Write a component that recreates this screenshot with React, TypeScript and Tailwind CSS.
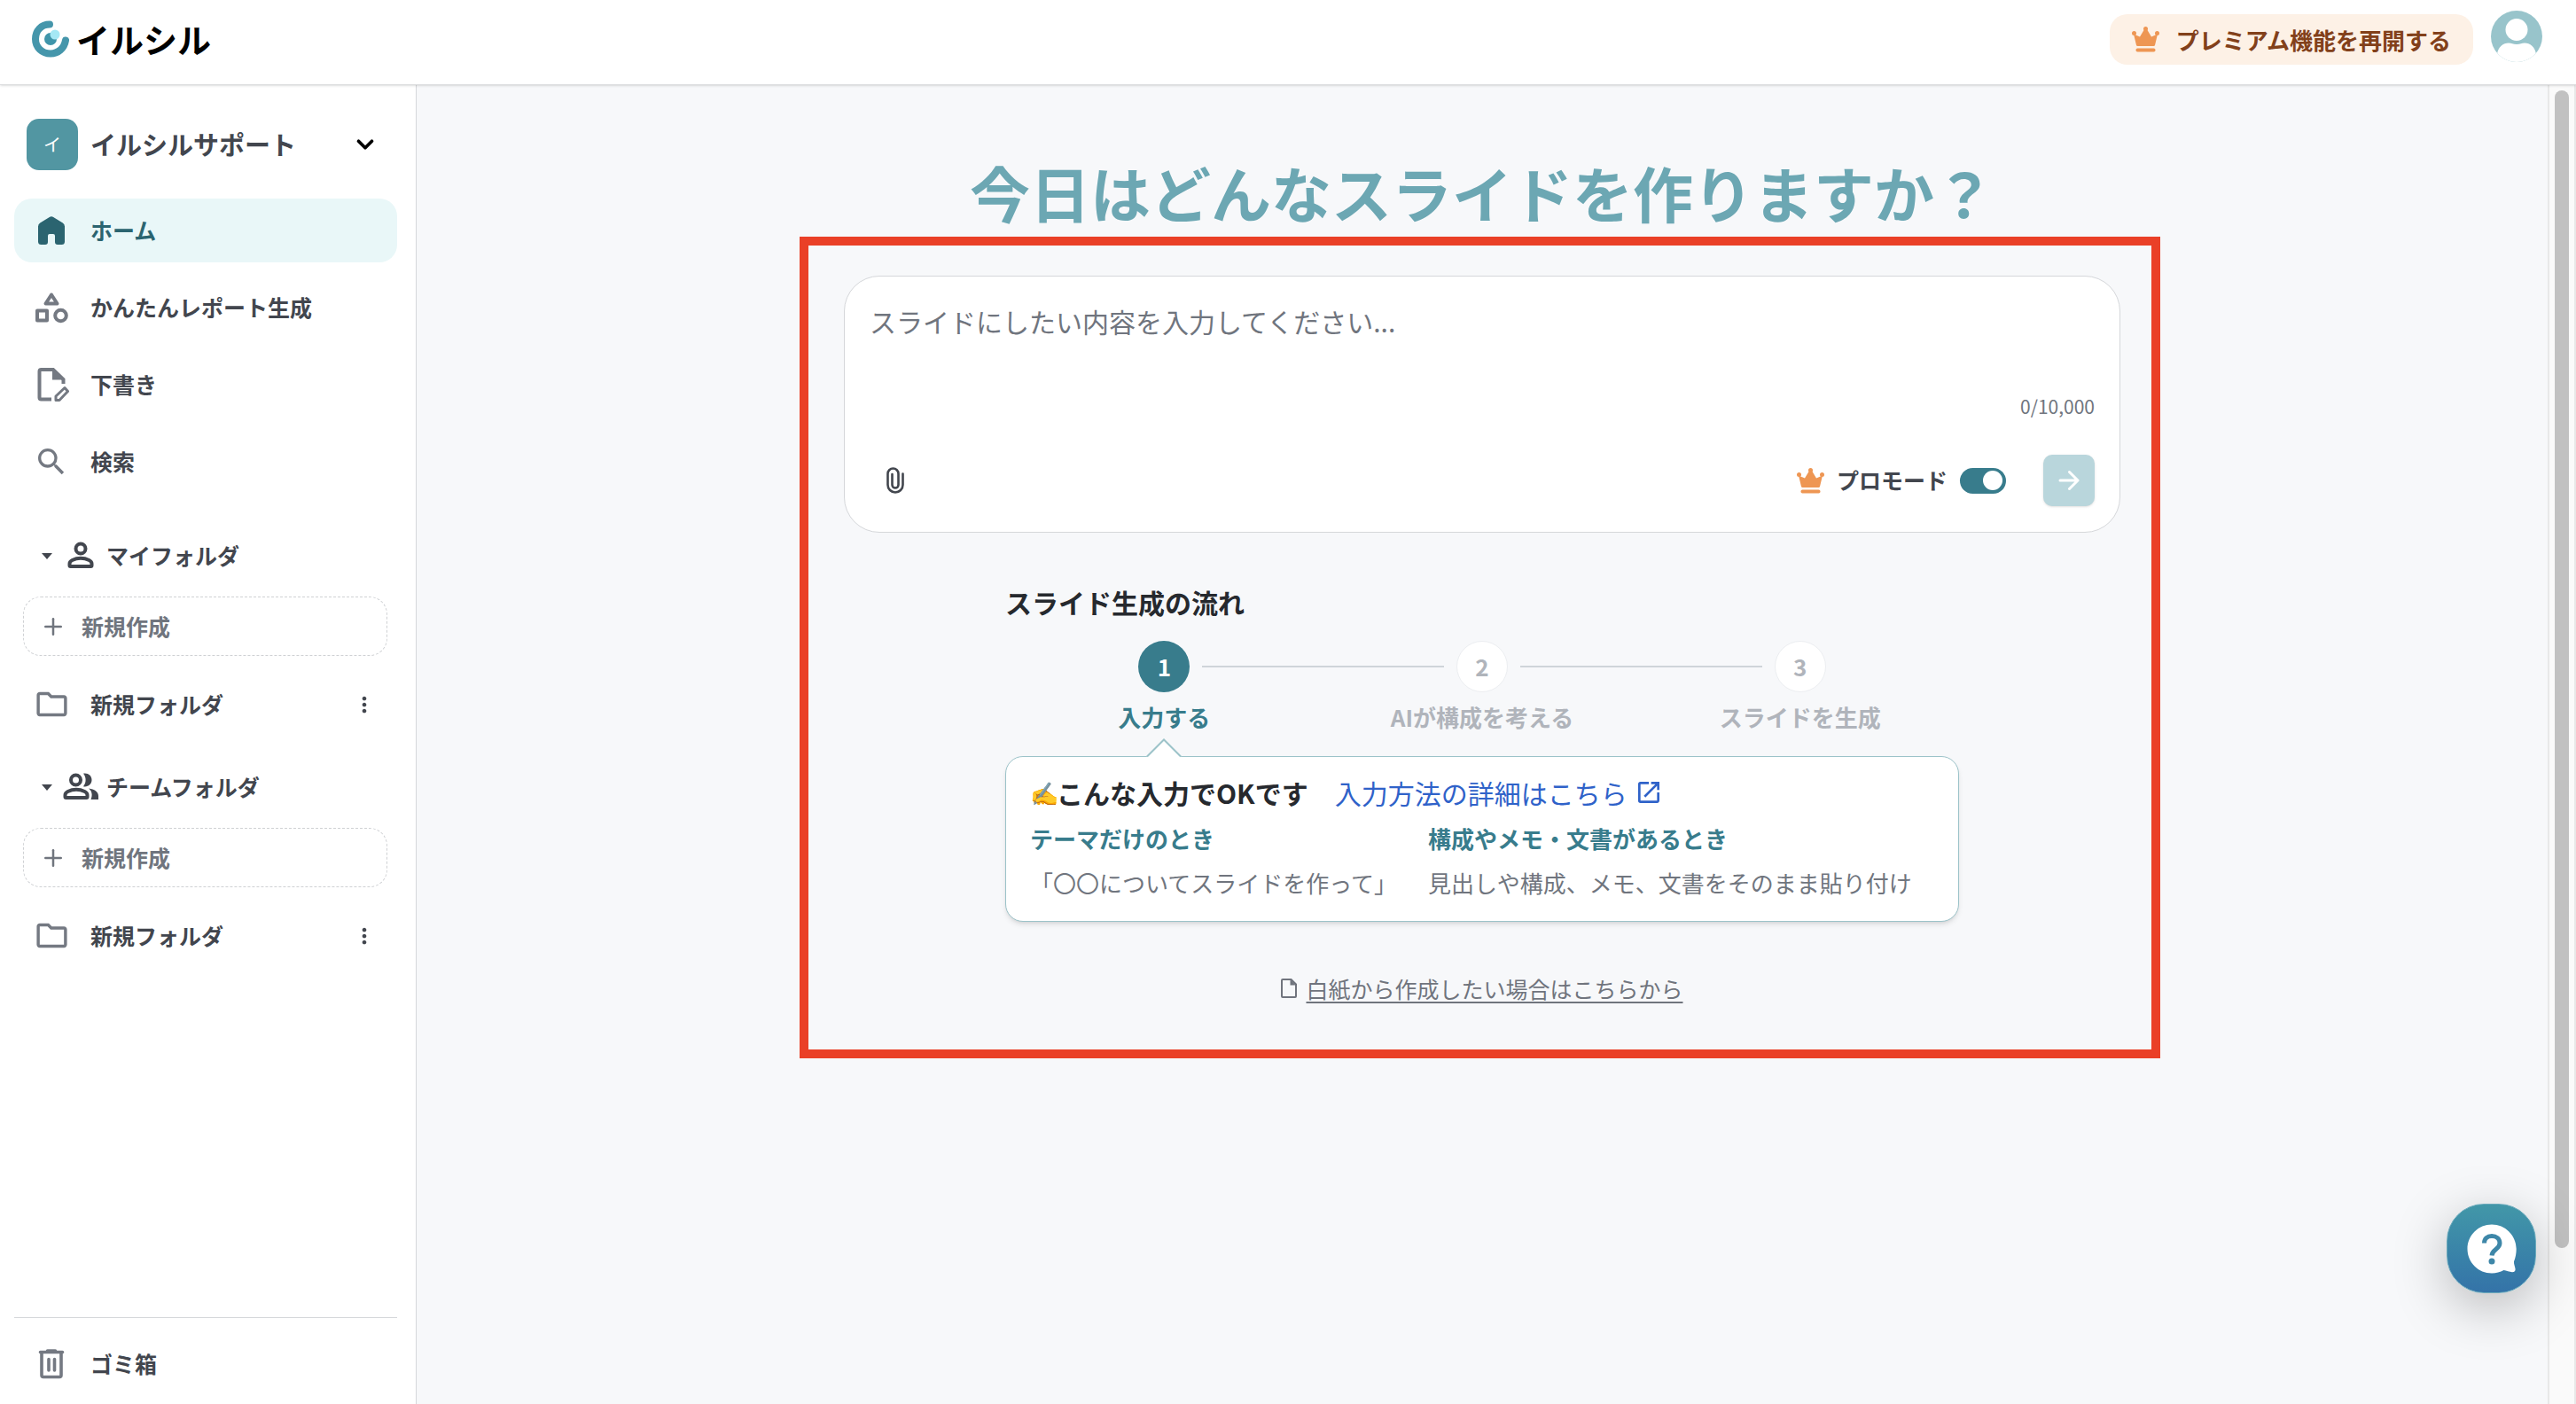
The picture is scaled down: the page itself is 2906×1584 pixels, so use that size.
import React from "react";
import { MdMoreVert, MdOpenInNew, MdOutlineFolder, MdSearch } from "react-icons/md";
import { ChevronDown, Plus } from "lucide-react";
import clsx from "clsx";

type IconProps = { className?: string };

// --- Icons ---

const LogoMark = ({ className }: IconProps) => (
  <svg viewBox="0 0 42 42" className={className} aria-hidden="true">
    <path
      d="M20 4.5C10.500 4.500 4 11.500 4 21c0 9.500 7.500 16.500 17 16.500 8.500 0 15.500-6 17-15"
      fill="none"
      stroke="#4596ab"
      strokeWidth="8"
      strokeLinecap="round"
    />
    <circle cx="21" cy="21" r="7" fill="#3f95aa" />
    <circle cx="26" cy="16" r="5.500" fill="#a5e8f5" />
  </svg>
);

const CrownIcon = ({ className }: IconProps) => (
  <svg viewBox="0 0 31 29" className={className} fill="#ee9653" aria-hidden="true">
    <circle cx="15.500" cy="2.500" r="2.500" />
    <circle cx="2.500" cy="7.500" r="2.500" />
    <circle cx="28.500" cy="7.500" r="2.500" />
    <path d="M2 8.500l7 3 4.500-7.500h4l4.500 7.500 7-3-3 12.500q-.3 1-1.500 1h-18q-1.200 0-1.500-1z" />
    <rect x="4.500" y="24.500" width="22" height="4" rx="1.800" />
  </svg>
);

const AvatarIcon = ({ className }: IconProps) => (
  <svg viewBox="0 0 58 58" className={className} aria-hidden="true">
    <clipPath id="avatar-clip">
      <circle cx="29" cy="29" r="29" />
    </clipPath>
    <g clipPath="url(#avatar-clip)">
      <rect width="58" height="58" fill="#98c4cb" />
      <circle cx="29" cy="21.500" r="12.500" fill="#fff" />
      <path d="M7 49c1-8 7-12.500 13-12.500 3 0 5 1.500 9 1.500s6-1.500 9-1.500c6 0 12 4.500 13 12.500v10H7z" fill="#fff" />
    </g>
  </svg>
);

const HomeIcon = ({ className }: IconProps) => (
  <svg viewBox="0 0 40 40" className={className} fill="#2b6470" aria-hidden="true">
    <path d="M7.200 11.500 17.800 5q2.200-1.300 4.400 0l10.600 6.500q2.200 1.600 2.200 4.200V32.500q0 3.500-3.500 3.500h-4.500q-3 0-3-3v-7q0-2-2-2h-4q-2 0-2 2v7q0 3-3 3H8.500Q5 36 5 32.500V15.700q0-2.600 2.200-4.200z" />
  </svg>
);

const CategoryIcon = ({ className }: IconProps) => (
  <svg
    viewBox="0 0 40 40"
    className={className}
    fill="none"
    stroke="currentColor"
    strokeWidth="4"
    strokeLinejoin="round"
    aria-hidden="true"
  >
    <path d="M20 5.500 26.500 15.500h-13z" />
    <rect x="4" y="23.500" width="11" height="11" />
    <circle cx="30.500" cy="29" r="6.300" />
  </svg>
);

const DraftIcon = ({ className }: IconProps) => (
  <svg viewBox="0 0 40 40" className={className} fill="none" stroke="#747982" aria-hidden="true">
    <path d="M20 36.500H8.500q-2 0-2-2V5q0-2 2-2H22l11.500 11V19" strokeWidth="4" />
    <path d="M21 3h2l12 11.500H21z" fill="#747982" stroke="none" />
    <path d="M25 37.500v-4.500l10-9.500 3.500 4-9.500 10z" strokeWidth="3" strokeLinejoin="round" />
  </svg>
);

const TrashIcon = ({ className }: IconProps) => (
  <svg viewBox="0 0 40 40" className={className} fill="none" stroke="#747982" aria-hidden="true">
    <path d="M7.500 6.500h25M15.500 5h9" strokeWidth="3.600" strokeLinecap="round" />
    <path d="M9 8v24.500q0 2 2 2h18q2 0 2-2V8" strokeWidth="3.600" />
    <path d="M17 14.500V27M23.500 14.500V27" strokeWidth="3.600" strokeLinecap="round" />
  </svg>
);

const PersonIcon = ({ className }: IconProps) => (
  <svg viewBox="0 0 40 40" className={className} fill="none" stroke="#42464e" strokeWidth="4" aria-hidden="true">
    <circle cx="20" cy="12" r="5.500" />
    <path d="M7.500 31v-2q0-2.500 3-4 4.500-2.200 9.500-2.200t9.500 2.200q3 1.500 3 4v2q0 1-1 1h-23q-1 0-1-1z" />
  </svg>
);

const PeopleIcon = ({ className }: IconProps) => (
  <svg viewBox="0 0 40 40" className={className} fill="none" stroke="#42464e" strokeWidth="4" aria-hidden="true">
    <circle cx="14.500" cy="12" r="5.500" />
    <path d="M2.500 31v-2q0-2.500 3-4 4.500-2.200 9.500-2.200t9.500 2.200q3 1.500 3 4v2q0 1-1 1h-23q-1 0-1-1z" />
    <path
      d="M23 4.800c5-1 9.500 2.200 9.500 7.200s-4.500 8.200-9.500 7.200c3.500-4 3.500-10.400 0-14.400zM29 21.500c6.500 1 11 3.500 11 8.500v4h-8.500c2-4.500 1.500-9.500-2.500-12.500z"
      fill="#42464e"
      stroke="none"
    />
  </svg>
);

const ClipIcon = ({ className }: IconProps) => (
  <svg
    viewBox="0 0 20 30"
    className={className}
    fill="none"
    stroke="#42464e"
    strokeWidth="2.600"
    strokeLinecap="round"
    aria-hidden="true"
  >
    <path d="M18.500 7.500V20a8.500 8.500 0 0 1-17 0V7.500a6 6 0 0 1 12 0V20a3.500 3.500 0 0 1-7 0V8" />
  </svg>
);

const PageIcon = ({ className }: IconProps) => (
  <svg viewBox="0 0 18 22" className={className} fill="none" stroke="#70747d" strokeWidth="2" aria-hidden="true">
    <path d="M3 1h8.500L17 6.500V20q0 1-1 1H2q-1 0-1-1V2q0-1 1-1z" />
    <path d="M10.500 1v6.500H17z" fill="#70747d" stroke="none" />
  </svg>
);

const HelpIcon = ({ className }: IconProps) => (
  <svg viewBox="0 0 56 56" className={className} aria-hidden="true">
    <path
      d="M28 .5C13 .5.500 12.500.500 28S13 55.500 28 55.500c5 0 9.500-1.200 13.500-3.500 3 .5 6.500 2 9.500 2.200 2.500 0 4-1.500 3.500-4-.5-2.700-1.700-5-1.500-8 1.700-4.200 2.700-9 2.700-14.200C55.500 12.500 43 .5 28 .5z"
      fill="#fff"
    />
    <path
      d="M19.500 21.500c0-5 3.500-8 8.500-8s9 3 9 8c0 7-8.500 7-9 14"
      fill="none"
      stroke="#3e87a8"
      strokeWidth="5"
    />
    <circle cx="28" cy="42" r="3.500" fill="#3e87a8" />
  </svg>
);

// --- Data ---

const navItems = [
  { label: "ホーム", icon: HomeIcon, active: true },
  { label: "かんたんレポート生成", icon: CategoryIcon, active: false },
  { label: "下書き", icon: DraftIcon, active: false },
  { label: "検索", icon: MdSearch, active: false },
];

const folderGroups = [
  { label: "マイフォルダ", icon: PersonIcon },
  { label: "チームフォルダ", icon: PeopleIcon },
];

const steps = ["入力する", "AIが構成を考える", "スライドを生成"];

// --- Layout parts ---

const Header = () => (
  <header className="relative z-10 flex h-24 shrink-0 items-start justify-between border-b border-[#dcdddf] bg-white pl-9 pr-[38px] shadow-sm">
    <a href="#" className="flex h-[88px] items-center gap-2 text-[38px] font-bold leading-none text-black">
      <LogoMark className="size-[42px]" />
      イルシル
    </a>
    <div className="flex items-start gap-5 pt-3">
      <button
        type="button"
        className="mt-1 flex h-[57px] items-center gap-[19px] rounded-[20px] bg-[#fdf1e6] px-[25px] text-[26px] font-bold text-[#82401a]"
      >
        <CrownIcon className="h-[29px] w-[31px]" />
        プレミアム機能を再開する
      </button>
      <button type="button" aria-label="アカウント">
        <AvatarIcon className="size-[58px]" />
      </button>
    </div>
  </header>
);

const FolderGroup = ({ label, icon: Icon }: (typeof folderGroups)[number]) => (
  <section className="pb-[29px]">
    <button type="button" className="flex h-14 w-full items-center pl-[47px] font-bold">
      <svg viewBox="0 0 12 7" className="mr-3 h-[7px] w-3" fill="#42464e" aria-hidden="true">
        <path d="M0 0h12L6 7z" />
      </svg>
      <Icon className="mr-[9px] size-10" />
      {label}
    </button>
    <button
      type="button"
      className="ml-[26px] mt-[18px] flex h-[67px] w-[411px] items-center gap-[17px] rounded-[20px] border border-dashed border-[#cfd1d4] pl-[18px] font-bold text-[#70757e]"
    >
      <Plus className="size-[30px]" strokeWidth={2} />
      新規作成
    </button>
    <div className="mt-[18px] flex h-[73px] items-center pl-[38px] pr-11">
      <a href="#" className="flex flex-1 items-center gap-[23px] font-bold">
        <MdOutlineFolder className="size-[41px] text-[#747982]" />
        新規フォルダ
      </a>
      <button type="button" aria-label="メニュー">
        <MdMoreVert className="size-7" />
      </button>
    </div>
  </section>
);

const Sidebar = () => (
  <aside className="flex w-[470px] shrink-0 flex-col border-r border-[#d5d7da] bg-white text-[25px] text-[#42464e]">
    <button type="button" className="mt-[38px] flex h-[58px] items-center pl-[30px] pr-[42px] text-left">
      <span className="mr-[14px] flex size-[58px] items-center justify-center rounded-[14px] bg-[#5296a2] text-xl text-white">
        イ
      </span>
      <span className="flex-1 text-[29px] font-bold">イルシルサポート</span>
      <ChevronDown className="size-[30px] text-black" strokeWidth={3} />
    </button>
    <nav className="mt-8 flex flex-col gap-[15px] pl-4 pr-[21px]">
      {navItems.map(({ label, icon: Icon, active }) => (
        <a
          key={label}
          href="#"
          className={clsx(
            "flex h-[72px] items-center gap-6 rounded-[20px] pl-[22px] font-bold",
            active && "bg-[#e9f7f8] text-[#2b6470]"
          )}
        >
          <Icon className={clsx("size-10", !active && "text-[#747982]")} />
          {label}
        </a>
      ))}
    </nav>
    <div className="mt-[42px]">
      {folderGroups.map((group) => (
        <FolderGroup key={group.label} {...group} />
      ))}
    </div>
    <div className="mb-[9px] ml-4 mr-[21px] mt-auto border-t border-[#d5d7da] pt-4">
      <a href="#" className="flex h-[72px] items-center gap-6 pl-[22px] font-bold">
        <TrashIcon className="size-10" />
        ゴミ箱
      </a>
    </div>
  </aside>
);

const PromptCard = () => (
  <form className="flex h-[290px] flex-col rounded-[40px] border border-[#d5d7da] bg-white px-7 pb-[29px] pt-[30px]">
    <textarea
      aria-label="スライドの内容"
      placeholder="スライドにしたい内容を入力してください..."
      className="h-[101px] w-full resize-none text-[30px] leading-[40px] outline-none placeholder:text-[#70757e]"
    />
    <div className="text-right text-[21px] leading-[30px] text-[#70757e]">0/10,000</div>
    <div className="mt-auto flex items-center">
      <button type="button" aria-label="ファイルを添付" className="ml-[19px]">
        <ClipIcon className="h-[30px] w-5" />
      </button>
      <CrownIcon className="ml-auto h-[29px] w-[31px]" />
      <label className="ml-[14px] mr-[42px] flex items-center gap-[14px] text-[25px] font-bold text-[#42464e]">
        プロモード
        <span className="flex">
          <input type="checkbox" defaultChecked className="peer sr-only" />
          <span className="flex h-[29px] w-[52px] items-center justify-end rounded-full bg-[#387c8c] px-1">
            <span className="size-[22px] rounded-full bg-white" />
          </span>
        </span>
      </label>
      <button
        type="submit"
        aria-label="送信"
        className="flex size-[58px] items-center justify-center rounded-[10px] bg-[#b9d6dc] shadow-sm"
      >
        <svg viewBox="0 0 24 24" className="size-6" fill="none" stroke="#fff" strokeWidth="3" strokeLinecap="round" strokeLinejoin="round">
          <path d="M2 12h20M12.500 2.500 22 12l-9.500 9.500" />
        </svg>
      </button>
    </div>
  </form>
);

const Stepper = () => (
  <ol className="grid grid-cols-3 text-center">
    {steps.map((step, index) => (
      <li key={step} className="flex flex-col items-center">
        <div className="flex w-full items-center gap-[14px]">
          {/* The connector is split in two halves, one on each side of a circle */}
          <span className={clsx("h-0.5 flex-1", index > 0 && "bg-[#cfd4d9]")} />
          <span
            className={clsx(
              "flex size-[58px] items-center justify-center rounded-full pb-0.5 text-[26px] font-bold",
              index === 0 ? "bg-[#387c8c] text-white" : "border border-[#eceef1] bg-white text-[#b0b4bb]"
            )}
          >
            {index + 1}
          </span>
          <span className={clsx("h-0.5 flex-1", index < steps.length - 1 && "bg-[#cfd4d9]")} />
        </div>
        <span
          className={clsx(
            "mt-2 text-[26px] font-bold leading-[40px]",
            index === 0 ? "text-[#387c8c]" : "text-[#b0b4bb]"
          )}
        >
          {step}
        </span>
      </li>
    ))}
  </ol>
);

const HintPanel = () => (
  <div className="relative mt-6 rounded-[20px] border border-[#9cc3c9] bg-white px-[27px] pb-[18px] pt-[18px] shadow-md">
    <svg viewBox="0 0 40 22" className="absolute -top-[21px] left-[158px] h-[22px] w-10" fill="#fff" aria-hidden="true">
      <path d="M1 20.500 20 1.500l19 19V22H1z" />
      <path d="M1 20.500 20 1.500l19 19" stroke="#9cc3c9" strokeWidth="2" />
    </svg>
    <div className="flex items-center text-[30px] leading-[44px]">
      <p className="mr-[30px] flex items-center font-bold text-[#26292e]">
        <span className="w-[30px] text-[26px]">✍️</span>
        こんな入力でOKです
      </p>
      <a href="#" className="flex items-center gap-2 text-[#2f62c9]">
        入力方法の詳細はこちら
        <MdOpenInNew className="size-8" />
      </a>
    </div>
    <dl className="mt-[5px] grid grid-flow-col grid-cols-[416px_1fr] grid-rows-2 gap-x-[33px] text-[26px] leading-[50px] text-[#70757e]">
      <dt className="font-bold text-[#387c8c]">テーマだけのとき</dt>
      <dd>「〇〇についてスライドを作って」</dd>
      <dt className="font-bold text-[#387c8c]">構成やメモ・文書があるとき</dt>
      <dd>見出しや構成、メモ、文書をそのまま貼り付け</dd>
    </dl>
  </div>
);

const App: React.FC = () => {
  return (
    <div
      lang="ja"
      className="flex h-screen flex-col overflow-hidden bg-[#f7f8fa] font-['Noto_Sans_CJK_JP',sans-serif]"
    >
      <Header />
      <div className="flex min-h-0 flex-1">
        <Sidebar />
        <main className="flex min-w-0 flex-1 flex-col items-center">
          <h1 className="mt-[71px] text-[68px] font-bold leading-[100px] text-[#6ca7b3]">
            今日はどんなスライドを作りますか？
          </h1>
          <div className="relative mt-11 w-full max-w-[1440px]">
            {/* Highlight frame */}
            <div className="pointer-events-none absolute -bottom-[60px] -left-[50px] -right-[45px] -top-11 border-10 border-[#ea4027]" />
            <PromptCard />
            <section className="mx-auto mt-14 w-full max-w-[1076px]">
              <h2 className="mb-[22px] text-[30px] font-bold leading-[44px] text-[#26292e]">スライド生成の流れ</h2>
              <Stepper />
              <HintPanel />
            </section>
            <div className="mt-14 flex items-center justify-center gap-[10px] text-[25px] leading-[38px] text-[#70747d]">
              <PageIcon className="h-[22px] w-[18px]" />
              <a href="#" className="underline decoration-2 underline-offset-4">
                白紙から作成したい場合はこちらから
              </a>
            </div>
          </div>
        </main>
        {/* Scroll track */}
        <div className="w-8 shrink-0 border-x-2 border-[#e8e8e8] bg-[#fafafa] px-1.5 pt-1.5">
          <div className="h-[1306px] rounded-full bg-[#c1c1c1]" />
        </div>
      </div>
      <button
        type="button"
        aria-label="ヘルプ"
        className="fixed bottom-[125px] right-[45px] flex size-[101px] items-center justify-center rounded-[42px] border border-[#6aa9bb] bg-linear-to-b from-[#4297a8] to-[#3473a8] shadow-[0_16px_60px_rgba(0,0,0,0.25)]"
      >
        <HelpIcon className="size-14" />
      </button>
    </div>
  );
};

export default App;
